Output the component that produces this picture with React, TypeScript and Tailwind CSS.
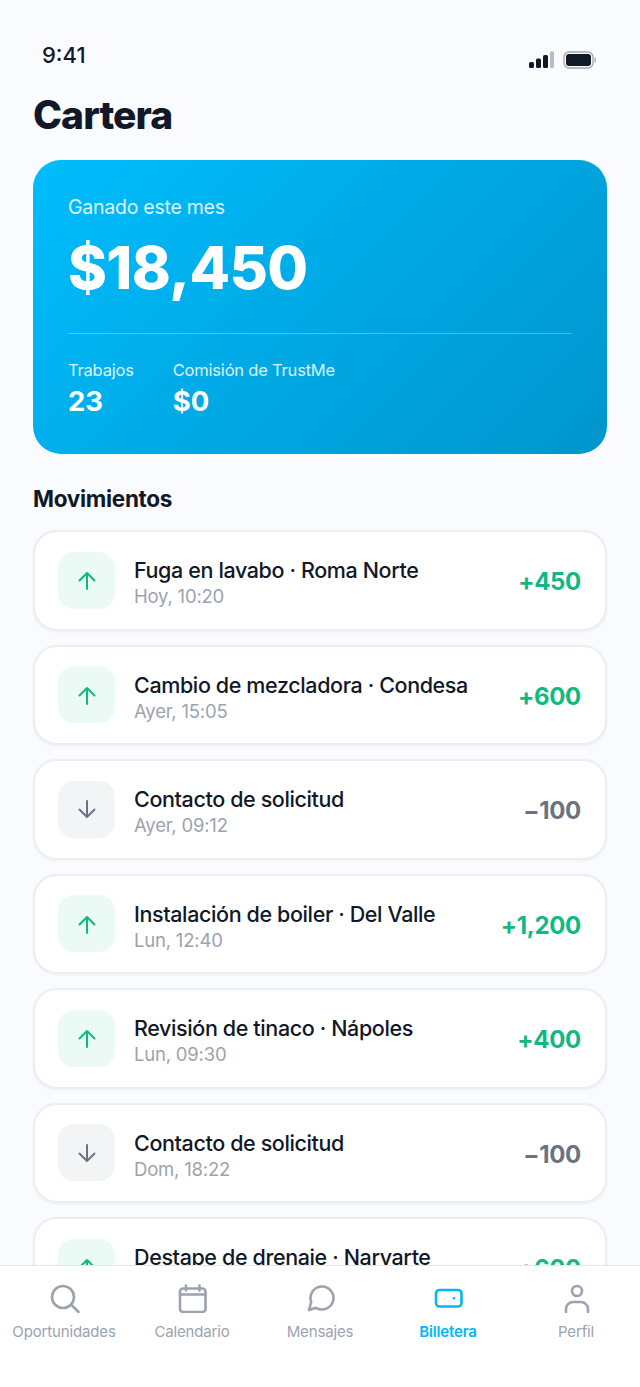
import React from "react";

const rows = [
  { t: "Fuga en lavabo · Roma Norte", s: "Hoy, 10:20", a: "+450", up: true },
  { t: "Cambio de mezcladora · Condesa", s: "Ayer, 15:05", a: "+600", up: true },
  { t: "Contacto de solicitud", s: "Ayer, 09:12", a: "−100", up: false },
  { t: "Instalación de boiler · Del Valle", s: "Lun, 12:40", a: "+1,200", up: true },
  { t: "Revisión de tinaco · Nápoles", s: "Lun, 09:30", a: "+400", up: true },
  { t: "Contacto de solicitud", s: "Dom, 18:22", a: "−100", up: false },
  { t: "Destape de drenaje · Narvarte", s: "Dom, 11:05", a: "+600", up: true },
];

function Arrow({ up }: { up: boolean }) {
  return (
    <svg width="24" height="24" viewBox="0 0 24 24" fill="none" stroke={up ? "#10b981" : "#6b7280"} strokeWidth="2" strokeLinecap="round" strokeLinejoin="round">
      {up ? <path d="M12 21V5M4.5 12.5 12 5l7.5 7.5" /> : <path d="M12 4v16M4.5 12.5 12 20l7.5-7.5" />}
    </svg>
  );
}

function Row({ t, s, a, up }: { t: string; s: string; a: string; up: boolean }) {
  return (
    <div className="flex items-center h-[100.5px] shrink-0 rounded-[24px] border-2 border-[#eceef1] bg-white pl-[23px] pr-[24px] shadow-[0_1px_3px_rgba(17,24,39,0.05)]">
      <div className={`flex items-center justify-center w-[57px] h-[57px] rounded-[16px] shrink-0 ${up ? "bg-[#ebfaf4]" : "bg-[#f3f4f6]"}`}>
        <Arrow up={up} />
      </div>
      <div className="ml-[19px] flex-1 min-w-0 pt-[4px]">
        <div className="text-[21.5px] leading-[28px] font-medium tracking-[-0.38px] text-[#111827] whitespace-nowrap">{t}</div>
        <div className="text-[18.5px] leading-[24px] text-[#9ca3af] tracking-[-0.2px] whitespace-nowrap">{s}</div>
      </div>
      <div className={`pt-[4px] text-[24px] font-bold tracking-[-0.3px] ${up ? "text-[#10b981]" : "text-[#6b7280]"}`}>{a}</div>
    </div>
  );
}

function Tab({ label, active, children }: { label: string; active?: boolean; children: React.ReactNode }) {
  return (
    <div className="flex flex-col items-center w-[128px]">
      <div className="h-[36px] flex items-center justify-center">{children}</div>
      <div className={`mt-[7px] text-[15px] leading-[20px] tracking-[-0.15px] ${active ? "font-semibold text-[#00b8f5]" : "text-[#9ca3af]"}`}>{label}</div>
    </div>
  );
}

const ic = { fill: "none", stroke: "#9ca3af", strokeWidth: 2.6, strokeLinecap: "round" as const, strokeLinejoin: "round" as const };

export default function App() {
  return (
    <div className="relative w-[640px] h-[1387px] flex flex-col overflow-hidden bg-[#f9fbfe] font-['Inter','Liberation_Sans',sans-serif]">
      <div className="flex-1 min-h-0 overflow-hidden px-[33px]">
        <div className="flex items-center justify-between h-[40px] mt-[35px] pl-[9px] pr-[11px]">
          <span className="text-[22px] font-medium text-[#111827]">9:41</span>
          <div className="flex items-center gap-[9px] mt-[9px]">
            <svg width="25" height="17" viewBox="0 0 25 17">
              <rect x="0" y="11" width="5" height="6" rx="1.5" fill="#111827" />
              <rect x="7" y="7.5" width="5" height="9.5" rx="1.5" fill="#111827" />
              <rect x="14" y="4" width="5" height="13" rx="1.5" fill="#111827" />
              <rect x="21" y="0.5" width="4" height="16.5" rx="1" fill="#b9bcc2" />
            </svg>
            <svg width="33" height="18" viewBox="0 0 33 18">
              <rect x="1" y="1" width="29" height="16" rx="5" fill="none" stroke="#a3a6ad" strokeWidth="1.3" />
              <rect x="3" y="3" width="25" height="12" rx="3" fill="#111827" />
              <rect x="31.5" y="6.5" width="1.3" height="5" rx="0.6" fill="#a3a6ad" />
            </svg>
          </div>
        </div>
        <h1 className="mt-[15px] text-[39px] leading-[50px] font-extrabold tracking-[-0.9px] text-[#111827]">Cartera</h1>
        <div className="mt-[20px] h-[294px] rounded-[28px] bg-[linear-gradient(135deg,#00bdfc,#0095cd)] px-[35px] pt-[32px] text-white">
          <div className="text-[19.5px] leading-[30px] tracking-[-0.25px] text-white/85">Ganado este mes</div>
          <div className="mt-[8px] text-[59px] leading-[76px] font-extrabold tracking-[-0.6px]">$18,450</div>
          <div className="mt-[27px] h-px bg-white/30" />
          <div className="mt-[24px] flex gap-[39px]">
            <div>
              <div className="text-[16.5px] leading-[24px] tracking-[-0.2px] text-white/85">Trabajos</div>
              <div className="mt-[1px] text-[27.5px] leading-[36px] font-bold">23</div>
            </div>
            <div>
              <div className="text-[16.5px] leading-[24px] tracking-[-0.2px] text-white/85">Comisión de TrustMe</div>
              <div className="mt-[1px] text-[27.5px] leading-[36px] font-bold">$0</div>
            </div>
          </div>
        </div>
        <h2 className="mt-[30px] text-[22.5px] leading-[30px] font-bold tracking-[-0.3px] text-[#111827]">Movimientos</h2>
        <div className="mt-[16px] flex flex-col gap-[14px]">
          {rows.map((r, i) => (
            <Row key={i} {...r} />
          ))}
        </div>
      </div>
      <nav className="h-[122px] shrink-0 border-t border-[#e5e7eb] bg-white flex pt-[13px]">
        <Tab label="Oportunidades">
          <svg width="32" height="32" viewBox="0 0 32 32" {...ic}>
            <circle cx="15" cy="16" r="11" />
            <path d="M23.5 24l7 7" />
          </svg>
        </Tab>
        <Tab label="Calendario">
          <svg width="30" height="32" viewBox="0 0 30 32" {...ic}>
            <rect x="3" y="7.5" width="25.5" height="23.5" rx="3" />
            <path d="M3 13.5h25.5M9 4.5v5M22.5 4.5v5" />
          </svg>
        </Tab>
        <Tab label="Mensajes">
          <svg width="30" height="30" viewBox="0 0 30 30" {...ic}>
            <path d="M4 28L6.2 20A11.5 11.5 0 1 1 11 25.8Z" />
          </svg>
        </Tab>
        <Tab label="Billetera" active>
          <svg width="30" height="26" viewBox="0 0 30 26" fill="none" stroke="#00b8f5" strokeWidth="2.6" strokeLinejoin="round">
            <rect x="3" y="6" width="25.5" height="16.5" rx="3.5" />
            <circle cx="21" cy="14.3" r="1.3" fill="#00b8f5" stroke="none" />
          </svg>
        </Tab>
        <Tab label="Perfil">
          <svg width="28" height="32" viewBox="0 0 28 32" {...ic}>
            <circle cx="15" cy="10" r="5" />
            <path d="M4 31v-3a7 7 0 0 1 7-7h8a7 7 0 0 1 7 7v3" />
          </svg>
        </Tab>
      </nav>
    </div>
  );
}
